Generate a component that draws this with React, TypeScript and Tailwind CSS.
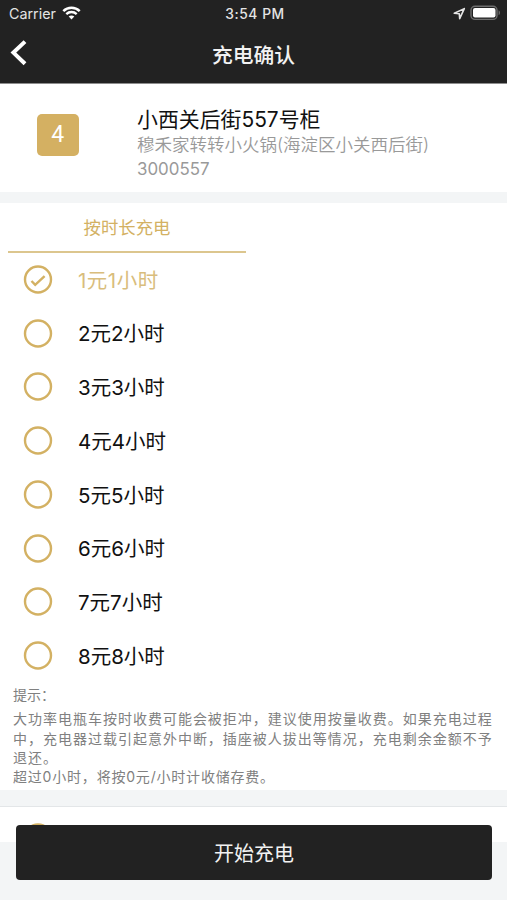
import React from 'react';
import clsx from 'clsx';

const OPTIONS = [
  '1元1小时',
  '2元2小时',
  '3元3小时',
  '4元4小时',
  '5元5小时',
  '6元6小时',
  '7元7小时',
  '8元8小时',
];

const TIPS = [
  '大功率电瓶车按时收费可能会被拒冲，建议使用按量收费。如果充电过程',
  '中，充电器过载引起意外中断，插座被人拔出等情况，充电剩余金额不予',
  '退还。',
];

function StatusBar() {
  return (
    <div className="flex h-[27px] items-center justify-between pl-[9px] pr-[6px] text-[#e4e4e4]">
      <div className="flex flex-1 items-center gap-[6px]">
        <span className="text-[14.3px]">Carrier</span>
        <svg width="19" height="14" viewBox="0 0 19 14" fill="none" className="-mt-[2px] text-white">
          <path d="M1.3 5.1C5.9.6 13.1.6 17.7 5.1" stroke="currentColor" strokeWidth="2.5" />
          <path d="M4.3 8.1c2.9-2.8 7.5-2.8 10.4 0" stroke="currentColor" strokeWidth="2.3" />
          <path d="M6.7 10.6c1.6-1.5 4-1.5 5.6 0L9.5 13.4z" fill="currentColor" />
        </svg>
      </div>
      <span className="pt-[1px] text-[13.8px] font-medium tracking-[0.55px]">3:54 PM</span>
      <div className="flex flex-1 items-center justify-end gap-[4px]">
        <svg width="13" height="13" viewBox="0 0 13 13" fill="none">
          <path d="M11.3 1.6 1.3 6.3l5 .5.4 4.9z" stroke="currentColor" strokeWidth="1.6" strokeLinejoin="round" />
        </svg>
        <svg width="31" height="16" viewBox="0 0 31 16" fill="none" className="-mt-[1px]">
          <rect x="1" y="1.2" width="26" height="13.2" rx="4" stroke="#6e6e6e" strokeWidth="1.4" />
          <rect x="3" y="3" width="22.5" height="9.6" rx="2" fill="#fff" />
          <path d="M28.6 5.3c1.8.8 1.8 4.2 0 5z" fill="#6e6e6e" />
        </svg>
      </div>
    </div>
  );
}

function Header() {
  return (
    <header className="h-[84px] border-b border-[#8d8d8d] bg-[#222]">
      <StatusBar />
      <div className="grid h-[54px] grid-cols-[60px_1fr_60px] items-center">
        <button className="-mt-[3px] pl-[10px]">
          <svg width="18" height="28" viewBox="0 0 18 28" fill="none">
            <path d="M15 2.6 3.4 13.6 15 24.8" stroke="#fff" strokeWidth="4" />
          </svg>
        </button>
        <h1 className="pt-[3px] text-center text-[20.8px] font-medium text-[#f2f2f2]">充电确认</h1>
      </div>
    </header>
  );
}

function Radio({ checked }: { checked: boolean }) {
  return (
    <svg width="30" height="30" viewBox="0 0 30 30" fill="none" stroke="#d3b163">
      <circle cx="15" cy="14.5" r="13" strokeWidth="2.4" />
      {checked && <path d="M8.5 16l3.7 3.9 9.4-8.8" strokeWidth="2.4" />}
    </svg>
  );
}

export default function App() {
  return (
    <div className="relative h-[900px] w-[507px] overflow-hidden bg-[#f3f5f6] font-['Inter','Noto_Sans_CJK_SC',sans-serif] whitespace-nowrap text-[#111]">
      <Header />

      <section className="flex h-[108px] bg-white pt-[23px]">
        <div className="mt-[6.5px] ml-[37px] flex h-[42px] w-[41.5px] items-center justify-center rounded-[5px] bg-[#d4b062] pt-[2px] font-['Roboto',sans-serif] text-[23px] text-white">
          4
        </div>
        <div className="ml-[58.5px]">
          <h2 className="text-[20.9px] leading-[26px]">小西关后街557号柜</h2>
          <p className="text-[17.5px] leading-[23px] font-[350] text-[#999]">穆禾家转转小火锅(海淀区小关西后街)</p>
          <p className="text-[16.9px] leading-[26px] text-[#999]">3000557</p>
        </div>
      </section>

      <section className="mt-[11px] h-[587px] bg-white">
        <div className="ml-[8px] h-[50px] w-[238px] border-b-2 border-[#dcc68e] text-center text-[17.4px] leading-[50px] text-[#d3b163]">
          按时长充电
        </div>
        <ul>
          {OPTIONS.map((label, i) => (
            <li key={label} className="flex h-[53.75px] items-center pl-[23px]">
              <Radio checked={i === 0} />
              <span className={clsx('ml-[25px] pt-[2px] text-[20.5px]', i === 0 && 'tracking-[0.5px] text-[#d9bd7c]')}>{label}</span>
            </li>
          ))}
        </ul>
        <div className="pl-[13px] text-[14px] text-[#808080]">
          <p className="h-[24px] leading-[24px]">提示：</p>
          <div className="tracking-[0.99px]">
            {TIPS.map((line) => (
              <p key={line} className="h-[19.5px] leading-[24px]">{line}</p>
            ))}
            <p className="leading-[21px] tracking-[0.8px]">超过0小时，将按0元/小时计收储存费。</p>
          </div>
        </div>
      </section>

      <section className="mt-[16px] h-[36px] overflow-hidden border-t border-[#e3e6e8] bg-white pt-[16px] pl-[23px]">
        <Radio checked={false} />
      </section>

      <button className="absolute top-[825px] left-[16px] h-[55px] w-[476px] rounded-[4px] bg-[#222] pt-[2px] text-[20px] text-[#f2f2f2]">
        开始充电
      </button>
    </div>
  );
}
